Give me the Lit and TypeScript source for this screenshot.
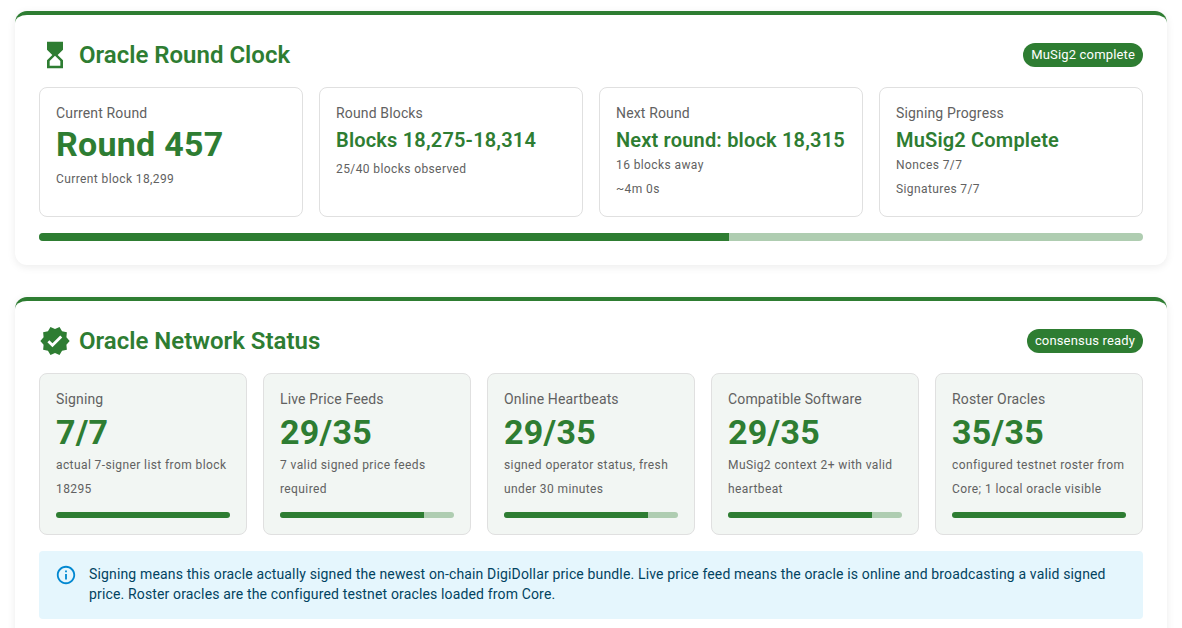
import { LitElement, css, html } from "lit";
import { customElement } from "lit/decorators.js";

type Clock = { label: string; value: string; big?: boolean; spaced?: boolean; notes: string[] };
type Stat = { label: string; value: string; note: string; pct: number };

const clocks: Clock[] = [
  { label: "Current Round", value: "Round 457", big: true, notes: ["Current block 18,299"] },
  { label: "Round Blocks", value: "Blocks 18,275-18,314", spaced: true, notes: ["25/40 blocks observed"] },
  { label: "Next Round", value: "Next round: block 18,315", notes: ["16 blocks away", "~4m 0s"] },
  { label: "Signing Progress", value: "MuSig2 Complete", notes: ["Nonces 7/7", "Signatures 7/7"] },
];

const stats: Stat[] = [
  { label: "Signing", value: "7/7", note: "actual 7-signer list from block 18295", pct: 100 },
  { label: "Live Price Feeds", value: "29/35", note: "7 valid signed price feeds required", pct: 82.86 },
  { label: "Online Heartbeats", value: "29/35", note: "signed operator status, fresh under 30 minutes", pct: 82.86 },
  { label: "Compatible Software", value: "29/35", note: "MuSig2 context 2+ with valid heartbeat", pct: 82.86 },
  { label: "Roster Oracles", value: "35/35", note: "configured testnet roster from Core; 1 local oracle visible", pct: 100 },
];

@customElement("app-root")
export class AppRoot extends LitElement {
  static styles = css`
    :host {
      display: block;
      height: 628px;
      overflow: hidden;
      background: #fff;
      font-family: Roboto, "Liberation Sans", sans-serif;
      color: #616161;
    }
    .page {
      display: flex;
      flex-direction: column;
      gap: 32px;
      padding: 11px 15px 0;
    }
    .card {
      background: #fff;
      border-top: 4px solid #2e7d32;
      border-radius: 12px;
      padding: 24px;
      box-shadow: 0 2px 8px rgba(0, 0, 0, 0.08);
    }
    .head {
      display: flex;
      align-items: center;
      justify-content: space-between;
      margin-bottom: 16px;
    }
    .title {
      display: flex;
      align-items: center;
      gap: 8px;
      margin: 0;
      font-size: 24px;
      line-height: 32px;
      font-weight: 600;
      color: #2e7d32;
    }
    .title svg {
      width: 32px;
      height: 32px;
      fill: #2e7d32;
      display: block;
    }
    .chip {
      background: #2e7d32;
      color: #fff;
      font-size: 13px;
      font-weight: 450;
      line-height: 24px;
      letter-spacing: 0.16px;
      padding: 0 8px;
      border-radius: 12px;
    }
    .clocks {
      display: grid;
      grid-template-columns: repeat(4, 1fr);
      gap: 16px;
    }
    .clock {
      height: 130px;
      box-sizing: border-box;
      border: 1px solid #e0e0e0;
      border-radius: 8px;
      padding: 16px;
    }
    .label {
      font-size: 14px;
      line-height: 18px;
      letter-spacing: 0.15px;
      color: #616161;
    }
    .value {
      margin-top: 5px;
      font-size: 20px;
      line-height: 26px;
      font-weight: 600;
      letter-spacing: 0.18px;
      color: #2e7d32;
    }
    .value.big {
      margin: 0 0 1px;
      font-size: 34px;
      line-height: 44px;
      font-weight: 700;
      letter-spacing: 0.25px;
    }
    .note {
      font-size: 12px;
      line-height: 24px;
      letter-spacing: 0.4px;
      color: #616161;
    }
    .note.spaced {
      margin-top: 4px;
    }
    .track {
      margin-top: 16px;
      height: 8px;
      border-radius: 4px;
      overflow: hidden;
      background: #afcdb1;
    }
    .fill {
      height: 100%;
      background: #2e7d32;
    }
    .stats {
      display: grid;
      grid-template-columns: repeat(5, 1fr);
      gap: 16px;
    }
    .stat {
      box-sizing: border-box;
      height: 162px;
      display: flex;
      flex-direction: column;
      background: #f2f6f3;
      border: 1px solid #e0e0e0;
      border-radius: 8px;
      padding: 16px;
    }
    .stat .value {
      margin-top: 3px;
      font-size: 34px;
      line-height: 42px;
      font-weight: 700;
      letter-spacing: 0.25px;
    }
    .stat .track {
      margin-top: auto;
      height: 6px;
      border-radius: 3px;
    }
    .info {
      display: flex;
      gap: 12px;
      margin-top: 16px;
      padding: 13px 16px 15px;
      background: #e5f6fd;
      border-radius: 4px;
      font-size: 14px;
      line-height: 20px;
      letter-spacing: 0.15px;
      color: #014361;
    }
    .info svg {
      flex: none;
      width: 22px;
      height: 22px;
      fill: #0288d1;
    }
  `;

  render() {
    return html`
      <div class="page">
        <section class="card">
          <div class="head">
            <h2 class="title">
              <svg viewBox="0 0 24 24"><path d="M6 2l.01 6L10 12l-3.99 4.01L6 22h12v-6l-4-4 4-3.99V2H6zm10 14.5V20H8v-3.5l4-4 4 4z" /></svg>
              Oracle Round Clock
            </h2>
            <span class="chip">MuSig2 complete</span>
          </div>
          <div class="clocks">
            ${clocks.map(
              (c) => html`
                <div class="clock">
                  <div class="label">${c.label}</div>
                  <div class="value ${c.big ? "big" : ""}">${c.value}</div>
                  ${c.notes.map((n) => html`<div class="note ${c.spaced ? "spaced" : ""}">${n}</div>`)}
                </div>
              `
            )}
          </div>
          <div class="track"><div class="fill" style="width:62.5%"></div></div>
        </section>
        <section class="card">
          <div class="head">
            <h2 class="title">
              <svg viewBox="0 0 24 24"><path d="M23 12l-2.44-2.79.34-3.69-3.61-.82-1.89-3.2L12 2.96 8.6 1.5 6.71 4.69 3.1 5.5l.34 3.7L1 12l2.44 2.79-.34 3.7 3.61.82L8.6 22.5l3.4-1.47 3.4 1.46 1.89-3.19 3.61-.82-.34-3.69L23 12zm-12.91 4.72l-3.8-3.81 1.48-1.48 2.32 2.33 5.85-5.87 1.48 1.48-7.33 7.35z" /></svg>
              Oracle Network Status
            </h2>
            <span class="chip">consensus ready</span>
          </div>
          <div class="stats">
            ${stats.map(
              (s) => html`
                <div class="stat">
                  <div class="label">${s.label}</div>
                  <div class="value">${s.value}</div>
                  <div class="note">${s.note}</div>
                  <div class="track"><div class="fill" style="width:${s.pct}%"></div></div>
                </div>
              `
            )}
          </div>
          <div class="info">
            <svg viewBox="0 0 24 24"><path d="M11 7h2v2h-2zm0 4h2v6h-2zm1-9C6.48 2 2 6.48 2 12s4.48 10 10 10 10-4.48 10-10S17.52 2 12 2zm0 18c-4.41 0-8-3.59-8-8s3.59-8 8-8 8 3.59 8 8-3.59 8-8 8z" /></svg>
            <span>Signing means this oracle actually signed the newest on-chain DigiDollar price bundle. Live price feed means the oracle is online and broadcasting a valid signed price. Roster oracles are the configured testnet oracles loaded from Core.</span>
          </div>
        </section>
      </div>
    `;
  }
}

declare global {
  interface HTMLElementTagNameMap {
    "app-root": AppRoot;
  }
}
